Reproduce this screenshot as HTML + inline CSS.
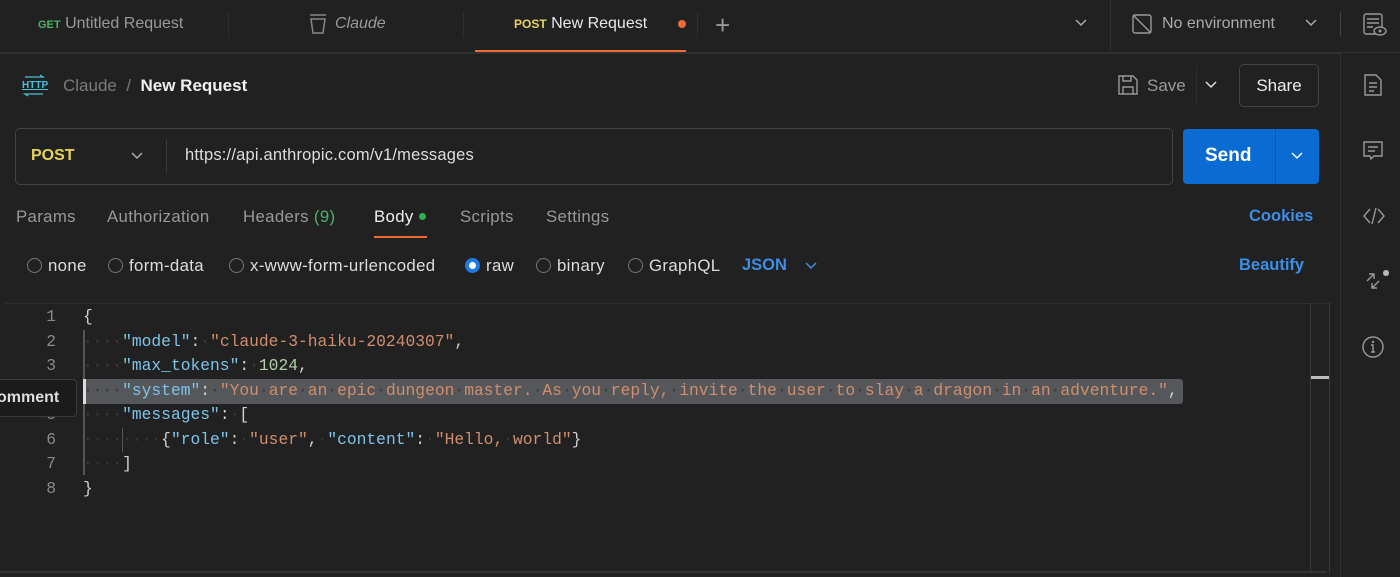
<!DOCTYPE html>
<html><head><meta charset="utf-8"><style>
*{margin:0;padding:0;box-sizing:border-box}
body{width:1400px;height:577px;background:#212121;font-family:"Liberation Sans",sans-serif;color:#cfcfcf;position:relative;overflow:hidden}
.a{position:absolute;white-space:nowrap}
.t{font-size:16px}
.r{font-size:16.8px;letter-spacing:0.35px}
.code{font-family:"Liberation Mono",monospace;font-size:16.3px;line-height:24.5px}
.k{color:#7ec3ea}.s{color:#d08e6c}.n{color:#b5cea8}.p{color:#cfcfcf}.d{color:#3a3a3a}
.ln{font-family:"Liberation Mono",monospace;font-size:16.3px;color:#8a8a8a;text-align:right;width:30px;left:26px;line-height:24.5px}
.rad{position:absolute;width:15px;height:15px;border:1px solid #777;border-radius:50%;top:258px}
svg{position:absolute}
</style></head><body>
<div class="a" style="left:0;top:52px;width:1340px;height:2px;background:#303030"></div>
<div class="a" style="left:1110px;top:0;width:1px;height:52px;background:#303030"></div>
<div class="a" style="left:1340px;top:52px;width:1px;height:525px;background:#303030"></div>
<div class="a" style="left:1340px;top:52px;width:60px;height:1px;background:#303030"></div>
<div class="a" style="left:228px;top:12px;width:1px;height:26px;background:#2e2e2e"></div>
<div class="a" style="left:463px;top:12px;width:1px;height:26px;background:#2e2e2e"></div>
<div class="a" style="left:697px;top:12px;width:1px;height:26px;background:#2e2e2e"></div>
<div class="a t" style="left:38px;top:15px;color:#9a9a9a"><span style="color:#4caf6a;font-size:11px;font-weight:bold">GET</span> Untitled Request</div>
<svg style="left:308px;top:13px" width="20" height="22" viewBox="0 0 20 22"><path d="M2 2h16M3 6h14l-2 14H5z" fill="none" stroke="#888" stroke-width="1.5"/></svg>
<div class="a t" style="left:335px;top:15px;color:#9a9a9a;font-style:italic">Claude</div>
<div class="a t" style="left:514px;top:15px;color:#e8e8e8"><span style="color:#e8d35a;font-size:12px;font-weight:bold">POST</span> New Request</div>
<div class="a" style="left:678px;top:20px;width:8px;height:8px;border-radius:50%;background:#ef6a34"></div>
<div class="a" style="left:475px;top:50px;width:211px;height:2px;background:#ef6a34"></div>
<div class="a" style="left:715px;top:10px;font-size:26px;color:#999;font-weight:300">+</div>
<svg style="left:1074px;top:18px" width="14" height="10"><path d="M2 2l5 5 5-5" fill="none" stroke="#aaa" stroke-width="1.5"/></svg>
<svg style="left:1131px;top:13px" width="22" height="22"><rect x="2" y="2" width="18" height="18" rx="2" fill="none" stroke="#999" stroke-width="1.4"/><path d="M2 2l18 18" stroke="#999" stroke-width="1.4"/></svg>
<div class="a t" style="left:1162px;top:15px;color:#aaa">No environment</div>
<svg style="left:1304px;top:18px" width="14" height="10"><path d="M2 2l5 5 5-5" fill="none" stroke="#aaa" stroke-width="1.5"/></svg>
<div class="a" style="left:1340px;top:12px;width:1px;height:24px;background:#444"></div>
<svg style="left:1363px;top:13px" width="24" height="24"><rect x="1" y="1" width="18" height="20" rx="2" fill="none" stroke="#999" stroke-width="1.4"/><path d="M4 6h12M4 10h12M4 14h6" stroke="#999" stroke-width="1.4"/><ellipse cx="17" cy="18" rx="6" ry="4" fill="#212121" stroke="#999" stroke-width="1.4"/><circle cx="17" cy="18" r="1.5" fill="#999"/></svg>
<svg style="left:21px;top:74px" width="26" height="24"><path d="M4 3h18l-3-2M22 20H4l3 2" fill="none" stroke="#4bbfd6" stroke-width="1.3"/></svg>
<div class="a" style="left:22px;top:80px;font-size:10px;color:#4bbfd6;text-decoration:underline;font-weight:bold">HTTP</div>
<div class="a" style="left:63px;top:76px;font-size:17px;color:#7a7a7a">Claude &nbsp;/&nbsp; <span style="color:#f0f0f0;font-weight:bold">New Request</span></div>
<svg style="left:1117px;top:74px" width="22" height="22"><path d="M2 2h14l4 4v14H2z M6 2v5h8V2 M6 20v-7h10v7" fill="none" stroke="#999" stroke-width="1.4"/></svg>
<div class="a" style="left:1147px;top:76px;font-size:17px;color:#9a9a9a">Save</div>
<div class="a" style="left:1196px;top:66px;width:1px;height:40px;background:#2e2e2e"></div>
<svg style="left:1204px;top:80px" width="14" height="10"><path d="M2 2l5 5 5-5" fill="none" stroke="#ddd" stroke-width="1.5"/></svg>
<div class="a" style="left:1239px;top:64px;width:80px;height:43px;border:1px solid #444;border-radius:5px;color:#eee;font-size:17px;text-align:center;line-height:41px">Share</div>
<div class="a" style="left:15px;top:128px;width:1158px;height:57px;border:1px solid #444;border-radius:5px"></div>
<div class="a" style="left:31px;top:147px;font-size:16px;font-weight:bold;color:#e8d35a">POST</div>
<svg style="left:130px;top:151px" width="14" height="10"><path d="M2 2l5 5 5-5" fill="none" stroke="#aaa" stroke-width="1.5"/></svg>
<div class="a" style="left:166px;top:140px;width:1px;height:33px;background:#3a3a3a"></div>
<div class="a" style="left:185px;top:146px;font-size:16.5px;color:#ddd;letter-spacing:0.2px">https://api.anthropic.com/v1/messages</div>
<div class="a" style="left:1183px;top:129px;width:136px;height:55px;background:#0a6bd2;border-radius:4px"></div>
<div class="a" style="left:1275px;top:129px;width:1px;height:55px;background:#0857aa"></div>
<div class="a" style="left:1205px;top:145px;font-size:19px;font-weight:bold;color:#fff">Send</div>
<svg style="left:1290px;top:151px" width="14" height="10"><path d="M2 2l5 5 5-5" fill="none" stroke="#fff" stroke-width="1.5"/></svg>
<div class="a r" style="left:16px;top:207px;color:#999">Params</div>
<div class="a r" style="left:107px;top:207px;color:#999">Authorization</div>
<div class="a r" style="left:243px;top:207px;color:#999">Headers <span style="color:#4caf6a">(9)</span></div>
<div class="a r" style="left:374px;top:207px;color:#eee">Body</div>
<div class="a" style="left:419px;top:213px;width:7px;height:7px;border-radius:50%;background:#2bb24c"></div>
<div class="a" style="left:374px;top:236px;width:53px;height:2px;background:#ef6a34"></div>
<div class="a r" style="left:460px;top:207px;color:#999">Scripts</div>
<div class="a r" style="left:546px;top:207px;color:#999">Settings</div>
<div class="a" style="left:1249px;top:207px;font-size:16.5px;font-weight:bold;color:#3d8ee6">Cookies</div>
<div class="rad" style="left:27px"></div><div class="a r" style="left:48px;top:256px;color:#ddd">none</div>
<div class="rad" style="left:108px"></div><div class="a r" style="left:129px;top:256px;color:#ddd">form-data</div>
<div class="rad" style="left:229px"></div><div class="a r" style="left:250px;top:256px;color:#ddd">x-www-form-urlencoded</div>
<div class="rad" style="left:465px;border:4px solid #1e7be0;background:#fff"></div><div class="a r" style="left:486px;top:256px;color:#ddd">raw</div>
<div class="rad" style="left:536px"></div><div class="a r" style="left:557px;top:256px;color:#ddd">binary</div>
<div class="rad" style="left:628px"></div><div class="a r" style="left:649px;top:256px;color:#ddd">GraphQL</div>
<div class="a" style="left:742px;top:256px;font-size:16.5px;font-weight:bold;color:#3d8ee6">JSON</div>
<svg style="left:804px;top:261px" width="14" height="10"><path d="M2 2l5 5 5-5" fill="none" stroke="#3d8ee6" stroke-width="1.5"/></svg>
<div class="a" style="left:1239px;top:256px;font-size:16.5px;font-weight:bold;color:#3d8ee6">Beautify</div>
<div class="a" style="left:5px;top:303px;width:1325px;height:1px;background:#2e2e2e"></div>
<div class="a" style="left:1310px;top:303px;width:1px;height:270px;background:#3a3a3a"></div>
<div class="a" style="left:1329px;top:303px;width:1px;height:270px;background:#3a3a3a"></div>
<div class="a" style="left:1311px;top:376px;width:18px;height:3px;background:#bbb"></div>
<div class="a" style="left:0;top:571px;width:1327px;height:2px;background:#333"></div>
<div class="a" style="left:83px;top:379px;width:1100px;height:25px;background:#55575a;border-radius:3px"></div>
<div class="a" style="left:83px;top:330px;width:2px;height:145px;background:#555"></div>
<div class="a" style="left:83px;top:379px;width:3px;height:25px;background:#ddd"></div>
<div class="a ln" style="top:305px">1<br>2<br>3<br>4<br>5<br>6<br>7<br>8</div>
<div class="a code" style="left:83px;top:305px"><span class="p">{</span><br><span class="d">····</span><span class="k">"model"</span><span class="p">:</span><span class="d">·</span><span class="s">"claude-3-haiku-20240307"</span><span class="p">,</span><br><span class="d">····</span><span class="k">"max_tokens"</span><span class="p">:</span><span class="d">·</span><span class="n">1024</span><span class="p">,</span><br><span class="d">····</span><span class="k">"system"</span><span class="p">:</span><span class="d">·</span><span class="s">"You<span class="d">·</span>are<span class="d">·</span>an<span class="d">·</span>epic<span class="d">·</span>dungeon<span class="d">·</span>master.<span class="d">·</span>As<span class="d">·</span>you<span class="d">·</span>reply,<span class="d">·</span>invite<span class="d">·</span>the<span class="d">·</span>user<span class="d">·</span>to<span class="d">·</span>slay<span class="d">·</span>a<span class="d">·</span>dragon<span class="d">·</span>in<span class="d">·</span>an<span class="d">·</span>adventure."</span><span class="p">,</span><br><span class="d">····</span><span class="k">"messages"</span><span class="p">:</span><span class="d">·</span><span class="p">[</span><br><span class="d">········</span><span class="p">{</span><span class="k">"role"</span><span class="p">:</span><span class="d">·</span><span class="s">"user"</span><span class="p">,</span><span class="d">·</span><span class="k">"content"</span><span class="p">:</span><span class="d">·</span><span class="s">"Hello,<span class="d">·</span>world"</span><span class="p">}</span><br><span class="d">····</span><span class="p">]</span><br><span class="p">}</span></div>
<div class="a" style="left:122px;top:428px;width:1px;height:24px;background:#555"></div>
<div class="a" style="left:-10px;top:379px;width:87px;height:38px;background:#1b1b1b;border:1px solid #3a3a3a;border-radius:4px;color:#ddd;font-size:16px;font-weight:bold;line-height:36px;padding-left:6px">omment</div>
<svg style="left:1363px;top:73px" width="20" height="24"><path d="M2 2h11l5 5v15H2z" fill="none" stroke="#999" stroke-width="1.4"/><path d="M6 10h8M6 14h8M6 18h5" stroke="#999" stroke-width="1.4"/></svg>
<svg style="left:1362px;top:140px" width="22" height="22"><path d="M2 2h18v14h-8l-3 3-1-3H2z" fill="none" stroke="#999" stroke-width="1.4"/><path d="M6 7h10M6 11h7" stroke="#999" stroke-width="1.4"/></svg>
<svg style="left:1362px;top:206px" width="24" height="20"><path d="M8 3L2 10l6 7M16 3l6 7-6 7M14 2l-4 16" fill="none" stroke="#999" stroke-width="1.4"/></svg>
<svg style="left:1364px;top:270px" width="26" height="24"><path d="M3 11l7-7M5 4h5v5M15 11l-7 7M8 13v5h5" fill="none" stroke="#999" stroke-width="1.4"/><circle cx="22" cy="3" r="3" fill="#bbb"/></svg>
<svg style="left:1362px;top:336px" width="22" height="22"><circle cx="11" cy="11" r="10" fill="none" stroke="#999" stroke-width="1.4"/><path d="M9 9h2v7M9 16h4" stroke="#999" stroke-width="1.4" fill="none"/><circle cx="11" cy="6" r="1.2" fill="#999"/></svg>
</body></html>
